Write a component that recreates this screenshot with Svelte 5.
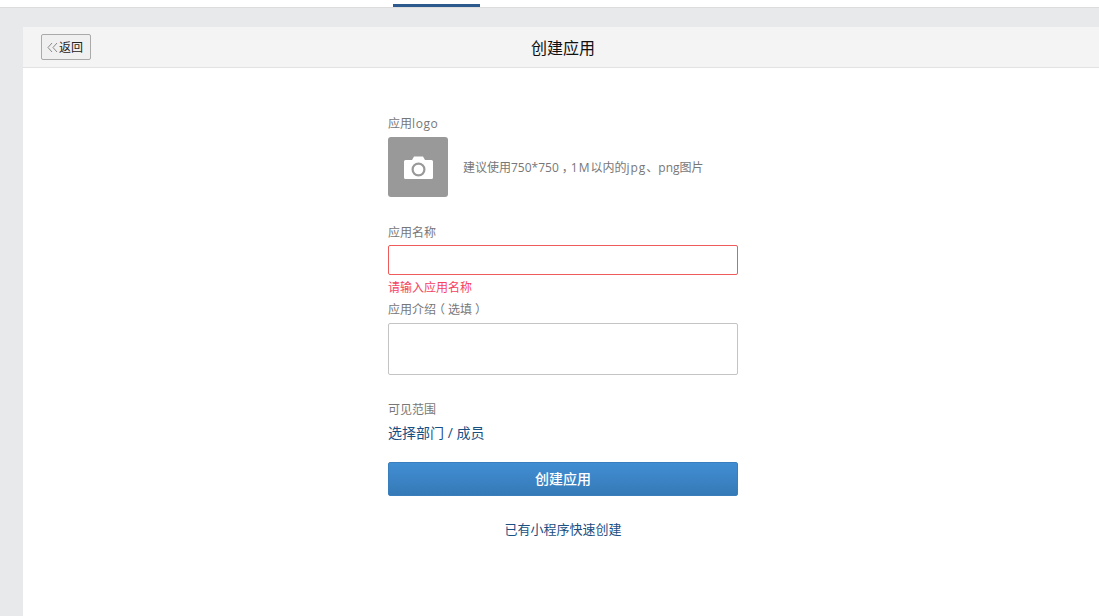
<script lang="ts">
	let name = $state("");
	let intro = $state("");
</script>

<div class="page">
	<header class="topbar">
		<span class="active-tab"></span>
	</header>

	<main class="sheet">
		<div class="sheet-head">
			<button class="back" type="button">
				<svg width="11" height="11" viewBox="0 0 11 11" aria-hidden="true">
					<path d="M5 1 1 5.500 5 10M10 1 6 5.500 10 10" fill="none" stroke="#8a8a8a" stroke-width="1" />
				</svg>
				<span>返回</span>
			</button>
			<h1>创建应用</h1>
		</div>

		<form class="form" onsubmit={(e) => e.preventDefault()}>
			<div class="label">应用<span class="latin">logo</span></div>
			<div class="logo-row">
				<div class="logo-box">
					<svg width="29" height="23" viewBox="0 0 29 23" aria-hidden="true">
						<path
							fill-rule="evenodd"
							fill="#fff"
							d="M1.500 4H8L10 .5h9L21 4h6.500A1.500 1.500 0 0 1 29 5.500v16a1.500 1.500 0 0 1-1.500 1.500h-26A1.500 1.500 0 0 1 0 21.500v-16A1.500 1.500 0 0 1 1.500 4ZM14.500 6.500a7 7 0 1 0 0 14 7 7 0 0 0 0-14Zm0 2.200a4.800 4.800 0 1 1 0 9.600 4.800 4.800 0 0 1 0-9.600Z"
						/>
					</svg>
				</div>
				<span class="hint">建议使用750*750<span class="punct">，</span><span class="latin">1M</span>以内的<span class="latin">jpg</span>、png图片</span>
			</div>

			<label class="label name-label" for="app-name">应用名称</label>
			<input id="app-name" class="field invalid" type="text" bind:value={name} />
			<div class="error">请输入应用名称</div>

			<label class="label intro-label" for="app-intro">应用介绍<span class="punct">（</span>选填<span class="punct">）</span></label>
			<textarea id="app-intro" class="field area" bind:value={intro}></textarea>

			<div class="label scope-label">可见范围</div>
			<a class="link scope" href="#scope">选择部门 / 成员</a>

			<button class="submit" type="submit">创建应用</button>

			<a class="link quick" href="#quick">已有小程序快速创建</a>
		</form>
	</main>
</div>

<style>
	:global(body) {
		margin: 0;
		background: #e8e9eb;
	}

	.page {
		display: flex;
		flex-direction: column;
		height: 616px;
		overflow: hidden;
		background: #e8e9eb;
		font-family: "Open Sans", "Noto Sans CJK SC", sans-serif;
		font-size: 12px;
		color: #777;
	}

	.topbar {
		flex: 0 0 7px;
		padding-left: 393px;
		background: #fff;
		border-bottom: 1px solid #dcdcdc;
	}

	.active-tab {
		display: block;
		width: 87px;
		height: 3px;
		margin-top: 4px;
		background: #2d5a8e;
	}

	.sheet {
		flex: 1;
		margin: 19px 0 0 23px;
		background: #fff;
		border-top-left-radius: 3px;
	}

	.sheet-head {
		position: relative;
		display: flex;
		align-items: center;
		height: 40px;
		padding-left: 18px;
		background: #f4f4f4;
		border-bottom: 1px solid #e2e2e4;
	}

	h1 {
		position: absolute;
		left: 4px;
		right: 0;
		margin: 0;
		text-align: center;
		font-size: 16px;
		font-weight: 400;
		color: #111;
	}

	.back {
		position: relative;
		z-index: 1;
		display: flex;
		align-items: center;
		gap: 1px;
		width: 50px;
		height: 26px;
		padding: 0 0 0 5px;
		background: #f0f0f0;
		border: 1px solid #aaa;
		border-radius: 2px;
		font: inherit;
		color: #222;
	}

	.form {
		display: flex;
		flex-direction: column;
		align-items: flex-start;
		width: 350px;
		margin: 0 0 0 365px;
		padding-top: 48px;
	}

	.latin {
		letter-spacing: 0.6px;
	}

	.hint .latin {
		letter-spacing: 1px;
	}

	/* half-width punctuation glyph, centred in a full cell like the original font */
	.punct {
		margin: 0 3px;
		font-feature-settings: "halt";
	}

	.label {
		line-height: 16px;
		white-space: nowrap;
		color: #777;
	}

	.logo-row {
		display: flex;
		align-items: center;
		gap: 15px;
		margin-top: 5px;
	}

	.logo-box {
		display: grid;
		place-items: center;
		width: 60px;
		height: 60px;
		background: #999;
		border-radius: 3px;
	}

	.hint {
		color: #777;
	}

	.name-label {
		margin-top: 28px;
	}

	.field {
		box-sizing: border-box;
		display: block;
		width: 350px;
		margin: 5px 0 0;
		padding: 4px 8px;
		background: #fff;
		border: 1px solid #c4c4c4;
		border-radius: 2px;
		outline: none;
		font: inherit;
	}

	.invalid {
		height: 30px;
		margin-top: 4px;
		border-color: #f05a5a;
	}

	.error {
		margin-top: 5px;
		line-height: 16px;
		color: #f5425f;
	}

	.intro-label {
		margin-top: 6px;
	}

	.area {
		height: 52px;
		resize: none;
	}

	.scope-label {
		margin-top: 27px;
	}

	.link {
		color: #1a4f82;
		text-decoration: none;
	}

	.scope {
		margin-top: 6px;
		font-size: 14px;
		line-height: 18px;
	}

	.submit {
		width: 350px;
		height: 34px;
		margin-top: 20px;
		padding: 0 0 2px;
		background: linear-gradient(#418dd3, #357ab7);
		border: 1px solid #3a7fbd;
		border-radius: 2px;
		font: inherit;
		font-size: 14px;
		font-weight: 500;
		color: #fff;
	}

	.quick {
		align-self: center;
		margin-top: 24px;
		font-size: 13px;
		line-height: 18px;
	}
</style>
